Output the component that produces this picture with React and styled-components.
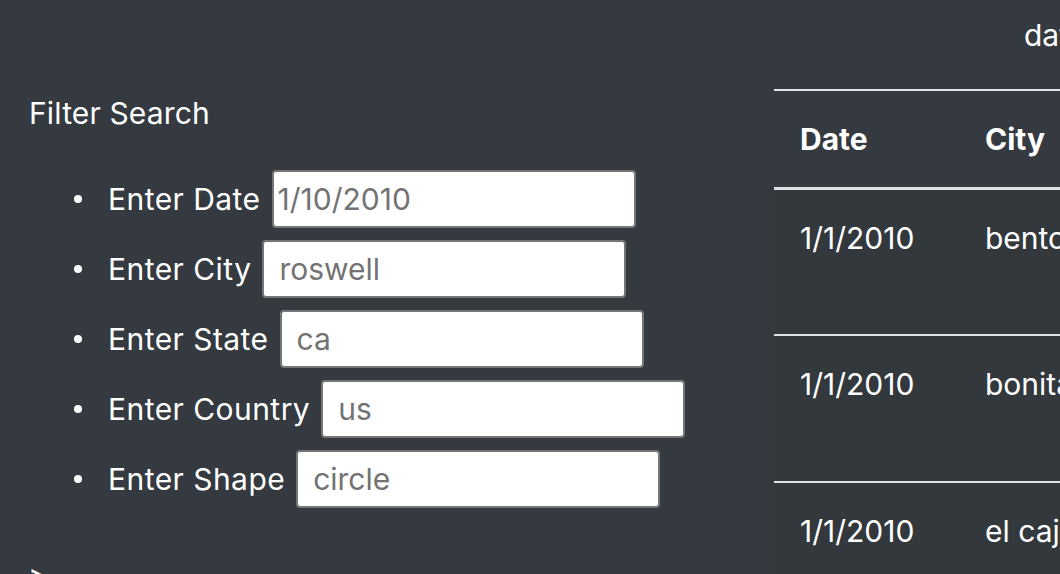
import React from "react";
import styled, { createGlobalStyle } from "styled-components";

const GlobalStyle = createGlobalStyle`
  html, body {
    margin: 0;
    padding: 0;
    background-color: #343a40;
    overflow: hidden;
  }
  body {
    font-family: Inter, "Noto Sans", sans-serif;
    color: #fff;
  }
`;

const filters = [
  { label: "Enter Date", value: "1/10/2010", tight: true },
  { label: "Enter City", value: "roswell" },
  { label: "Enter State", value: "ca" },
  { label: "Enter Country", value: "us" },
  { label: "Enter Shape", value: "circle" },
];

const sightings = [
  { date: "1/1/2010", city: "benton" },
  { date: "1/1/2010", city: "bonita" },
  { date: "1/1/2010", city: "el cajon" },
];

const App = () => {
  return (
    <>
      <GlobalStyle />
      <Page>
        <Sidebar>
          <Heading>Filter Search</Heading>
          <FilterList>
            {filters.map((f) => (
              <FilterItem key={f.label}>
                <Bullet />
                <Label>{f.label}</Label>
                <Field defaultValue={f.value} $tight={f.tight} />
              </FilterItem>
            ))}
          </FilterList>
          <Prompt>&gt;</Prompt>
        </Sidebar>
        <Main>
          <Title>data</Title>
          <Table>
            <thead>
              <tr>
                <Th $w={185}>Date</Th>
                <Th>City</Th>
              </tr>
            </thead>
            <tbody>
              {sightings.map((s, i) => (
                <tr key={i}>
                  <Td>{s.date}</Td>
                  <Td>{s.city}</Td>
                </tr>
              ))}
            </tbody>
          </Table>
        </Main>
      </Page>
    </>
  );
};

export default App;

const Page = styled.div`
  width: 1060px;
  height: 574px;
  display: flex;
  overflow: hidden;
`;

const Sidebar = styled.div`
  width: 774px;
  flex-shrink: 0;
  padding-top: 91px;
  box-sizing: border-box;
`;

const Heading = styled.div`
  margin-left: 29px;
  font-size: 30px;
  line-height: 44px;
  letter-spacing: 0.15px;
`;

const FilterList = styled.ul`
  list-style: none;
  margin: 35px 0 0 0;
  padding: 0 0 0 74px;
  display: flex;
  flex-direction: column;
  gap: 12px;
`;

const FilterItem = styled.li`
  display: flex;
  align-items: center;
  height: 58px;
`;

const Bullet = styled.span`
  width: 8px;
  height: 8px;
  border-radius: 50%;
  background: #fff;
  margin-right: 26px;
  flex-shrink: 0;
`;

const Label = styled.span`
  font-size: 30px;
  line-height: 44px;
  letter-spacing: 0.45px;
  margin-right: 11px;
  white-space: nowrap;
`;

const Field = styled.input`
  width: 364px;
  height: 58px;
  box-sizing: border-box;
  border: 2px solid #767676;
  border-radius: 4px;
  background: #fff;
  color: #737373;
  font-family: Inter, "Noto Sans", sans-serif;
  font-size: 30px;
  padding: 0 0 0 ${(p) => (p.$tight ? "4px" : "15px")};
  outline: none;
`;

const Prompt = styled.div`
  margin: 45px 0 0 28px;
  font-size: 30px;
  line-height: 44px;
`;

const Main = styled.div`
  flex: 1;
  min-width: 0;
`;

const Title = styled.div`
  height: 89px;
  box-sizing: border-box;
  padding: 13px 0 0 250px;
  font-size: 30px;
  line-height: 44px;
  white-space: nowrap;
`;

const Table = styled.table`
  width: 600px;
  border-collapse: collapse;
  font-size: 30px;
  line-height: 44px;
  text-align: left;
`;

const Th = styled.th`
  width: ${(p) => (p.$w ? `${p.$w}px` : "auto")};
  height: 98px;
  padding: 0 26px;
  box-sizing: border-box;
  font-weight: 700;
  vertical-align: middle;
  border-top: 2px solid #dee2e6;
  border-bottom: 3px solid #dee2e6;
`;

const Td = styled.td`
  height: 147px;
  padding: 26px 26px 0;
  box-sizing: border-box;
  vertical-align: top;
  background: #33383d;
  border-bottom: 2px solid #dee2e6;
`;
